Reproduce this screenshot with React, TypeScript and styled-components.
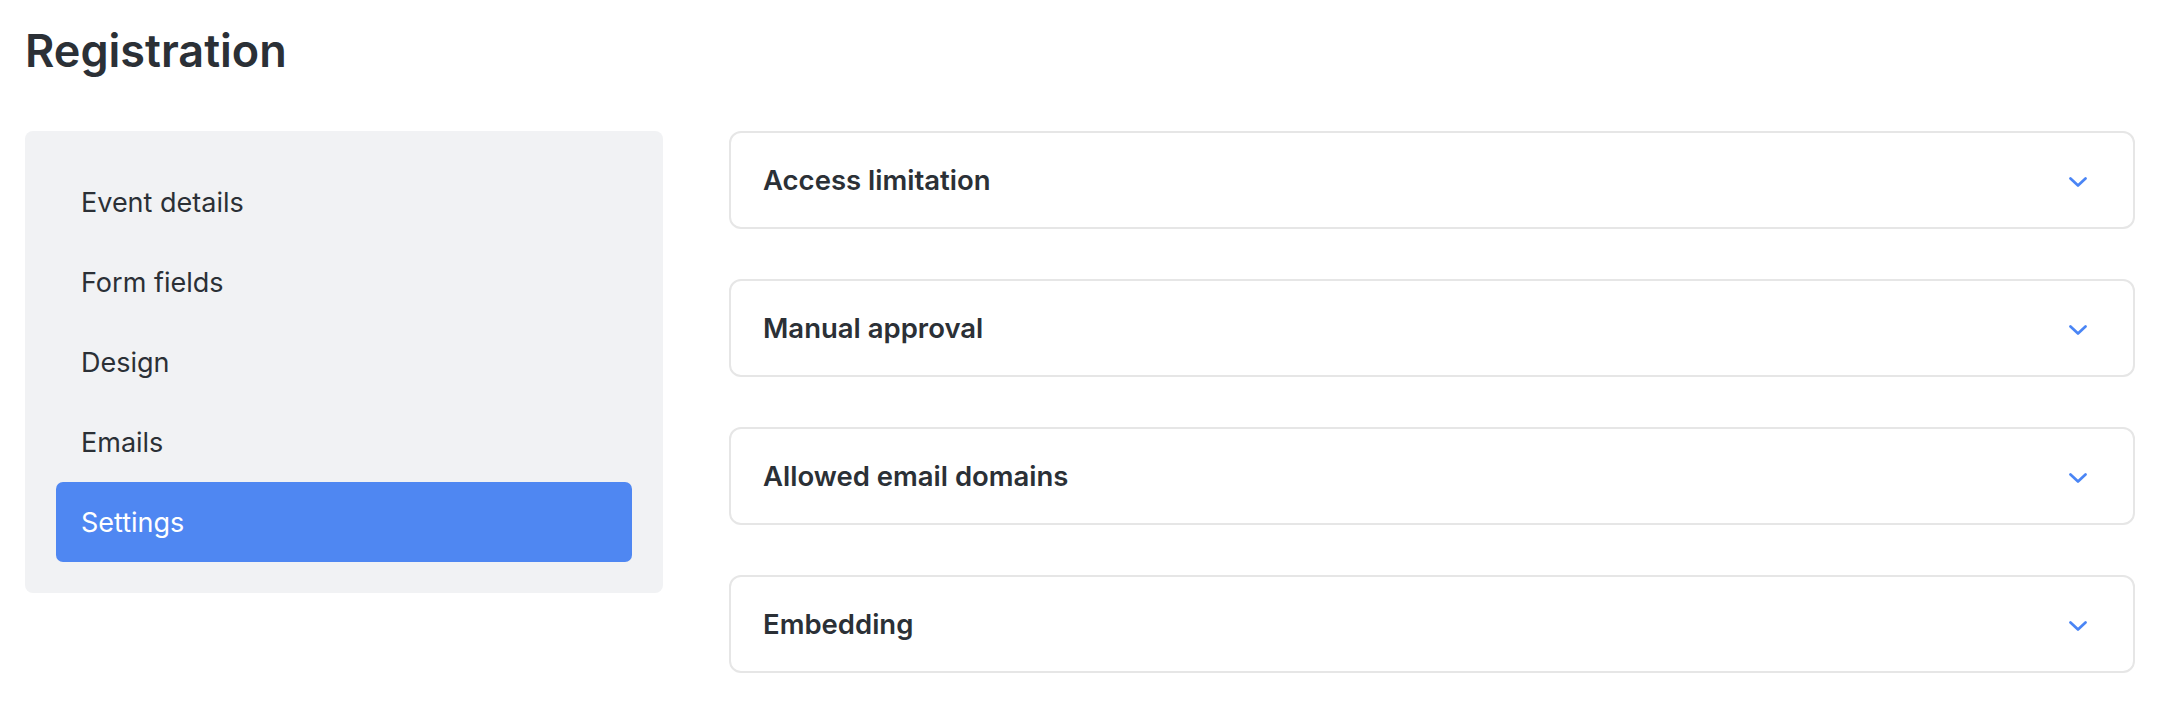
import { useState } from 'react';
import styled, { createGlobalStyle } from 'styled-components';

const GlobalStyle = createGlobalStyle`
  * {
    box-sizing: border-box;
  }

  body {
    margin: 0;
    background: #ffffff;
    color: #2b3036;
    font-family: Inter, 'Noto Sans', 'Liberation Sans', sans-serif;
  }
`;

const Page = styled.main`
  padding: 24px 23px 0 25px;
`;

const Title = styled.h1`
  margin: 0 0 53px;
  font-size: 45px;
  line-height: 54px;
  font-weight: 600;
  color: #2b3036;
`;

const Layout = styled.div`
  display: grid;
  grid-template-columns: 638px 1fr;
  gap: 66px;
  align-items: start;
`;

const Sidebar = styled.nav`
  display: flex;
  flex-direction: column;
  padding: 31px;
  background: #f1f2f4;
  border-radius: 8px;
`;

const NavItem = styled.button<{ $active?: boolean }>`
  display: flex;
  align-items: center;
  height: 80px;
  padding: 0 25px;
  border: none;
  border-radius: 7px;
  background: ${({ $active }) => ($active ? '#4f87f2' : 'transparent')};
  color: ${({ $active }) => ($active ? '#ffffff' : '#2b3036')};
  font-family: inherit;
  font-size: 27px;
  font-weight: 400;
  text-align: left;
  cursor: pointer;
`;

const Sections = styled.div`
  display: flex;
  flex-direction: column;
  gap: 50px;
`;

const Section = styled.section`
  border: 2px solid #e6e6e6;
  border-radius: 12px;
  background: #ffffff;
`;

const SectionHeader = styled.button`
  display: flex;
  align-items: center;
  justify-content: space-between;
  width: 100%;
  height: 94px;
  padding: 0 46px 0 32px;
  border: none;
  background: transparent;
  color: #2b3036;
  font-family: inherit;
  font-size: 27.5px;
  font-weight: 600;
  cursor: pointer;
`;

const Chevron = styled.svg`
  width: 18px;
  height: 10px;
  margin-top: 4px;
  flex-shrink: 0;
`;

const navItems = ['Event details', 'Form fields', 'Design', 'Emails', 'Settings'];

const sections = [
  'Access limitation',
  'Manual approval',
  'Allowed email domains',
  'Embedding',
];

const ChevronDown = () => (
  <Chevron viewBox="0 0 18 10" fill="none">
    <path
      d="M1.5 1.5 9 8.5l7.5-7"
      stroke="#4a85f5"
      strokeWidth="2.7"
      strokeLinecap="round"
      strokeLinejoin="round"
    />
  </Chevron>
);

const App = () => {
  const [active, setActive] = useState('Settings');

  return (
    <Page>
      <GlobalStyle />
      <Title>Registration</Title>
      <Layout>
        <Sidebar>
          {navItems.map((item) => (
            <NavItem
              key={item}
              $active={item === active}
              onClick={() => setActive(item)}
            >
              {item}
            </NavItem>
          ))}
        </Sidebar>
        <Sections>
          {sections.map((title) => (
            <Section key={title}>
              <SectionHeader>
                {title}
                <ChevronDown />
              </SectionHeader>
            </Section>
          ))}
        </Sections>
      </Layout>
    </Page>
  );
};

export default App;
